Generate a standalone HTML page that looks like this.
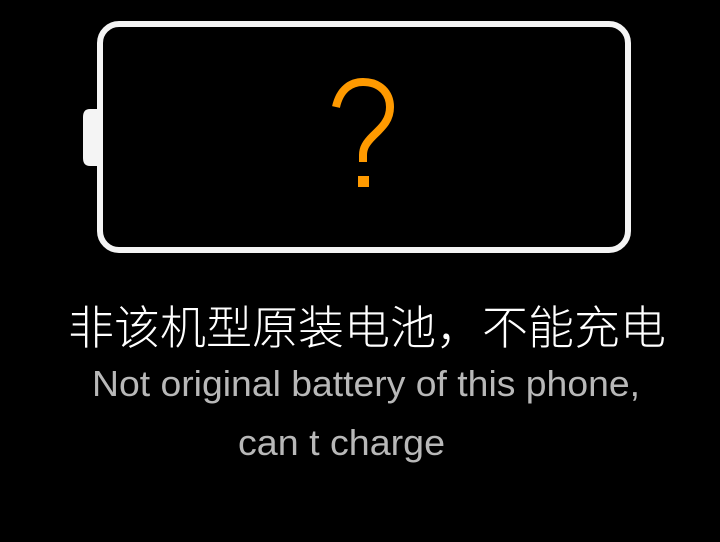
<!DOCTYPE html>
<html><head><style>
html,body{margin:0;padding:0;background:#000;width:720px;height:542px;overflow:hidden}
</style></head><body>
<svg width="720" height="542" viewBox="0 0 720 542" xmlns="http://www.w3.org/2000/svg">
<rect x="0" y="0" width="720" height="542" fill="#000"/>
<rect x="100" y="24" width="528" height="226" rx="19" ry="19" fill="none" stroke="#f4f4f4" stroke-width="6"/>
<path d="M97 109 H90 Q83 109 83 117 V158 Q83 166 90 166 H97 Z" fill="#f4f4f4"/>
<path d="M336 107 C340 89 351 82 363 82 C380 82 390 93 390 107 C390 121 381 128 373 136 C366 143 363 148 363 155 V162" fill="none" stroke="#ff9a00" stroke-width="8"/>
<rect x="358" y="176" width="11" height="11" fill="#ff9a00"/>
<text x="68" y="344" font-family="Noto Sans CJK SC, sans-serif" font-weight="300" font-size="46" fill="#fff" textLength="598" lengthAdjust="spacingAndGlyphs">非该机型原装电池，不能充电</text>
<text x="92" y="396" font-family="Liberation Sans, sans-serif" font-size="36" fill="#b8b8b8" textLength="548" lengthAdjust="spacingAndGlyphs">Not original battery of this phone,</text>
<text x="238" y="455" font-family="Liberation Sans, sans-serif" font-size="36" fill="#b8b8b8" textLength="207" lengthAdjust="spacingAndGlyphs">can t charge</text>
</svg>
</body></html>
